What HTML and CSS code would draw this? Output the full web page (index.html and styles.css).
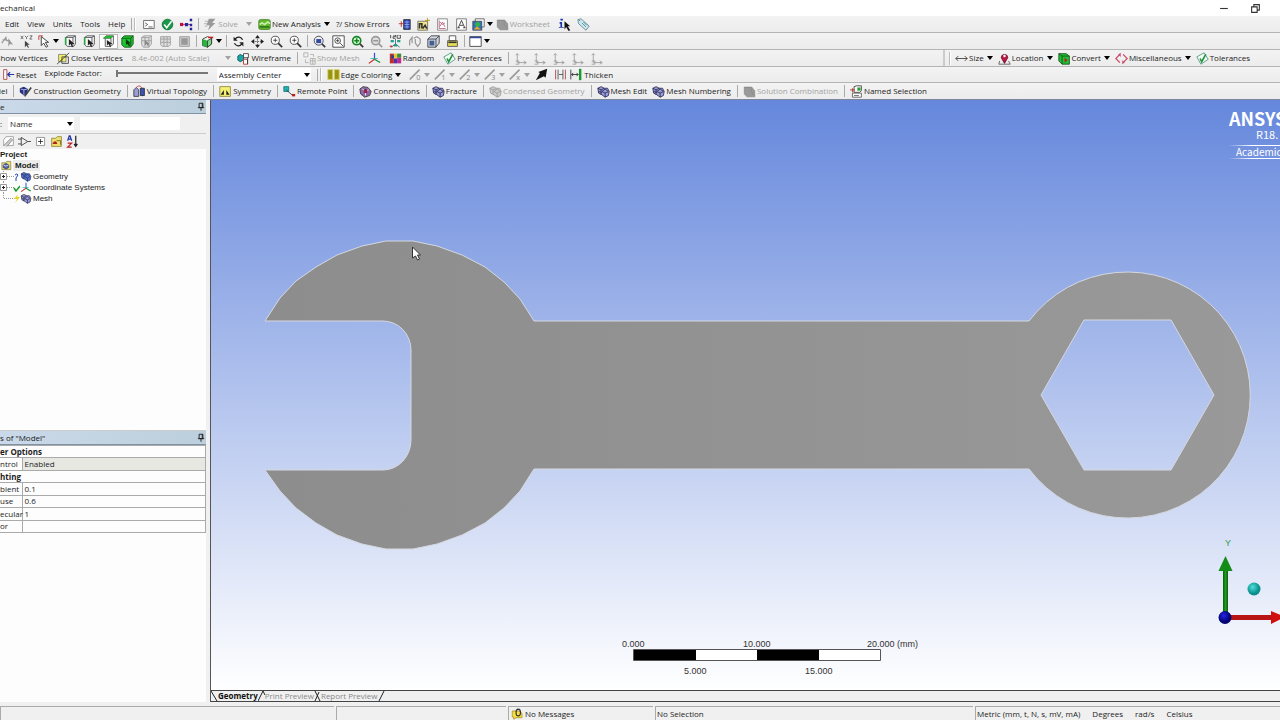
FILE: index.html
```html
<!DOCTYPE html>
<html lang="en">
<head>
<meta charset="utf-8">
<title>Mechanical</title>
<link rel="stylesheet" href="styles.css">
</head>
<body>
<svg class="sprite" aria-hidden="true">
  <symbol id="console" viewBox="0 0 16 16"><path d="M2 3h13v10H2z" fill="#fff" stroke="#555"/><path d="M4 6l3 2-3 2M8 11h5" fill="none" stroke="#444"/></symbol>
  <symbol id="check" viewBox="0 0 16 16"><circle cx="8" cy="8" r="6.500" fill="#18994a" stroke="#0b6a32"/><path d="M4 8l3 4 6-8" fill="none" stroke="#fff" stroke-width="2"/></symbol>
  <symbol id="nodes" viewBox="0 0 16 16"><path d="M1 8h12" stroke="#c03060" fill="none"/><path d="M0 6h4v4H0z" fill="#c01040"/><path d="M6 6h4v4H6zM12 1h3v3h-3zM12 7h3v3h-3zM12 12h3v3h-3z" fill="#26269c"/></symbol>
  <symbol id="bolt" viewBox="0 0 16 16"><path d="M6 1h8l-4 5h4L5 15l2-6H3z" fill="#999"/><path d="M1 4h4M0 7h4M1 10h3" stroke="#aaa"/></symbol>
  <symbol id="analysis" viewBox="0 0 16 16"><rect x="1" y="2" width="14" height="12" rx="2" fill="#65b832" stroke="#397d1a"/><path d="M2 8l3-2 3 2 4-3 3 2" stroke="#c9f0a5" fill="none" stroke-width="2"/><path d="M2 11h12" stroke="#2d7619" stroke-width="2"/></symbol>
  <symbol id="addbox" viewBox="0 0 16 16"><path d="M7 2h8v12H7z" fill="#2c45b3" stroke="#222"/><path d="M8 5h6M8 8h6M8 11h6M11 3v10" stroke="#98aef4"/><path d="M1 7h6M4 4v7" stroke="#b02020"/></symbol>
  <symbol id="chartnew" viewBox="0 0 16 16"><path d="M1 4h12v11H1z" fill="#eee58c" stroke="#666"/><path d="M3 13V7h3v6M7 13l3-4 2 4" stroke="#333" fill="none" stroke-width="2"/><path d="M10 3h6M13 0v6" stroke="#b08e12"/></symbol>
  <symbol id="plot" viewBox="0 0 16 16"><path d="M2 1h12v14H2z" fill="#fff" stroke="#777"/><path d="M4 3v10h8M5 5l3 3 3-2M5 10l3-5 3 6" fill="none" stroke="#b45470"/></symbol>
  <symbol id="letter" viewBox="0 0 16 16"><path d="M2 1h12v14H2z" fill="#fff" stroke="#666"/><path d="M4 12l4-9 4 9M6 9h4M3 12h3M10 12h3" fill="none" stroke="#222"/></symbol>
  <symbol id="picture" viewBox="0 0 16 16"><path d="M4 1h11v10H4z" fill="#fff" stroke="#555"/><path d="M1 4h11v11H1z" fill="#2c72c9" stroke="#444"/><circle cx="7" cy="8" r="3" fill="#31b345"/><path d="M2 14l4-4 5 4z" fill="#e5a52c"/></symbol>
  <symbol id="greyblock" viewBox="0 0 16 16"><path d="M1 2h10l4 5v8H5l-4-4z" fill="#999"/><path d="M2 3h8v5l4 5" fill="none" stroke="#888"/></symbol>
  <symbol id="info" viewBox="0 0 16 16"><path d="M3 1h3v2H3zM2 5h3v6h2v1H1v-1h2V7H2z" fill="#1733b4"/><path d="M8 4v10l2-3 3 5 2-1-3-5h3z" fill="#111"/></symbol>
  <symbol id="tag" viewBox="0 0 16 16"><path d="M1 2l4-1 10 9-4 5L2 7z" fill="#cde8ee" stroke="#58818c"/><path d="M6 6l5 5M8 5l4 4M2 2l2 2" stroke="#50838e"/></symbol>
  <symbol id="gcursor" viewBox="0 0 16 16"><path d="M1 10l5-7 1 4h4M2 6h4" fill="none" stroke="#9a9a9a" stroke-width="1.500"/><path d="M9 4v10l2-3 4 1z" fill="#999"/></symbol>
  <symbol id="xyz" viewBox="0 0 16 16"><path d="M1 1l3 4M4 1L1 5M6 1l2 2 2-2M8 3v2M12 1h3l-3 4h3" stroke="#555" fill="none"/><path d="M6 7v8l2-2 2 3 1-1-2-3h3z" fill="#444"/></symbol>
  <symbol id="pick" viewBox="0 0 16 16"><path d="M1 1h5M1 1v5" stroke="#b22"/><path d="M4 2v11l3-3 3 5 2-1-3-5h4z" fill="#fff" stroke="#222"/></symbol>
  <symbol id="cubeline" viewBox="0 0 16 16"><path d="M2 3l3-2h9v10l-2 3H4l-2-2zM2 3h9l3-2M11 3v10" fill="#f7f7f7" stroke="#444"/><path d="M2 3v9" stroke="#28a745" stroke-width="2"/><path d="M6 5v8l2-2 2 4 1-1-1-3h3z" fill="#222"/></symbol>
  <symbol id="cubeface" viewBox="0 0 16 16"><path d="M2 4l3-3h9v10l-3 3H4V4zM4 4h7l3-3M11 4v9" fill="#f7f7f7" stroke="#444"/><path d="M1 4l4-3h9l-3 3z" fill="#20b832"/><path d="M6 6v7l2-2 2 4 1-1-1-3h3z" fill="#222"/></symbol>
  <symbol id="cubegreen" viewBox="0 0 16 16"><path d="M1 4l3-3h11v10l-3 4H4l-3-3z" fill="#1fc52e" stroke="#114d17"/><path d="M1 4h11l3-3M12 4v10" fill="none" stroke="#114d17"/><path d="M6 5v7l2-1 2 3 1-1-1-3h2z" fill="#0c3710"/></symbol>
  <symbol id="cubegrey" viewBox="0 0 16 16"><path d="M2 3l3-2h9v10l-3 4H4l-2-3zM2 3h9l3-2M11 3v12M2 7h12M6 2v12" fill="#ddd" stroke="#999"/><path d="M6 6v7l2-2 2 3 1-4z" fill="#888"/></symbol>
  <symbol id="gridgrey" viewBox="0 0 16 16"><path d="M2 2h12v10l-2 2H4l-2-2zM2 5h12M2 9h12M6 2v12M10 2v12" fill="#ddd" stroke="#999"/></symbol>
  <symbol id="solidgrey" viewBox="0 0 16 16"><path d="M2 2h12v12H2z" fill="#ccc" stroke="#999"/><path d="M4 4h8v8H4z" fill="#999"/></symbol>
  <symbol id="extend" viewBox="0 0 16 16"><path d="M2 5l6-3 5 2v7l-5 4-6-2z" fill="#f4f4f4" stroke="#222"/><path d="M2 5l6 2v8l-6-2z" fill="#23b83a"/><path d="M8 7l5-3v7l-5 4z" fill="#7ed58a" stroke="#333"/><path d="M9 3h6" stroke="#c22" stroke-width="2"/></symbol>
  <symbol id="rotate" viewBox="0 0 16 16"><path d="M13 6a5 5 0 0 0-9-1M3 10a5 5 0 0 0 9 1" fill="none" stroke="#222" stroke-width="1.500"/><path d="M2 2v5h5zM14 14V9H9z" fill="#222"/></symbol>
  <symbol id="pan" viewBox="0 0 16 16"><path d="M8 2v12M2 8h12" stroke="#555" stroke-dasharray="2 1"/><path d="M8 0l3 4H5zM8 16l3-4H5zM0 8l4-3v6zM16 8l-4-3v6z" fill="#222"/></symbol>
  <symbol id="zoom" viewBox="0 0 16 16"><circle cx="6.500" cy="6.500" r="5" fill="#fff" stroke="#333"/><path d="M10 10l5 5" stroke="#333" stroke-width="2"/><path d="M4 6.500h5M6.500 4v5" stroke="#333"/></symbol>
  <symbol id="zoomfit" viewBox="0 0 16 16"><circle cx="7" cy="7" r="5.500" fill="#eef" stroke="#333"/><path d="M11 11l4 4" stroke="#333" stroke-width="2"/><path d="M4 5h6v5H4z" fill="#334a9c"/></symbol>
  <symbol id="zoombox" viewBox="0 0 16 16"><path d="M1 1h14v14H1z" fill="#fff" stroke="#333"/><circle cx="7" cy="7" r="3.500" fill="none" stroke="#333"/><path d="M10 10l4 4M5 7h4M7 5v4" stroke="#333"/></symbol>
  <symbol id="zoomgreen" viewBox="0 0 16 16"><circle cx="7" cy="7" r="5" fill="#d9ffd5" stroke="#168325" stroke-width="2"/><path d="M4 7h6M7 4v6" stroke="#168325" stroke-width="2"/><path d="M11 11l4 4" stroke="#333" stroke-width="2"/></symbol>
  <symbol id="zoomgrey" viewBox="0 0 16 16"><circle cx="7" cy="7" r="5" fill="#ddd" stroke="#999" stroke-width="2"/><path d="M4 7h6M11 11l4 4" stroke="#999" stroke-width="2"/></symbol>
  <symbol id="iso" viewBox="0 0 16 16"><path d="M2 0v4M5 0h3v2H5v2h3M10 0h4v4h-4z" fill="none" stroke="#333"/><path d="M8 5v6l-5 4M8 11l5 4" fill="none" stroke="#267"/><path d="M2 6h4v3H2zM10 6h4v3h-4zM6 11h4v3H6z" fill="#279c8c"/><path d="M1 13h3v2H1z" fill="#c33"/></symbol>
  <symbol id="look" viewBox="0 0 16 16"><path d="M2 13V7l3-4v7M7 4l4-2 4 3v5l-3 4-3-4V5" fill="none" stroke="#999" stroke-width="1.500"/></symbol>
  <symbol id="cubeview" viewBox="0 0 16 16"><path d="M1 5l4-4h10v9l-4 5H1z" fill="#cfd6e4" stroke="#333"/><path d="M1 5h10v10M11 5l4-4" fill="none" stroke="#333"/><path d="M3 7h6v6H3z" fill="#435f91"/></symbol>
  <symbol id="printer" viewBox="0 0 16 16"><path d="M4 1h8v6H4z" fill="#fff" stroke="#444"/><path d="M2 7h12v7H2z" fill="#e6df58" stroke="#444"/><path d="M3 9h10" stroke="#333" stroke-width="2"/></symbol>
  <symbol id="window" viewBox="0 0 16 16"><path d="M1 2h14v12H1z" fill="#fff" stroke="#333"/><path d="M1 3h14" stroke="#334a9c" stroke-width="2"/></symbol>
  <symbol id="closev" viewBox="0 0 16 16"><path d="M2 3h9v9H2z" fill="#f5f163" stroke="#777"/><path d="M0 15L15 1M6 6h8v8H6z" fill="none" stroke="#333"/></symbol>
  <symbol id="wire" viewBox="0 0 16 16"><path d="M1 5l3-2 4 2v5l-4 2-3-2z" fill="#18a7a7" stroke="#155"/><path d="M8 2h6v5H8z" fill="#fff" stroke="#333"/><path d="M8 9h5v6H8z" fill="#fff" stroke="#b22"/><path d="M13 7v8" stroke="#333"/></symbol>
  <symbol id="showmesh" viewBox="0 0 16 16"><path d="M1 1h5v5H1zM9 8h6v7H9zM9 11h6M12 8v7M9 3h4v3M3 9v4h4" fill="none" stroke="#aaa"/></symbol>
  <symbol id="axes" viewBox="0 0 16 16"><path d="M8 9V1" stroke="#2a50d0" stroke-width="1.500"/><path d="M8 9l-7 5" stroke="#c22" stroke-width="1.500"/><path d="M8 9l7 4" stroke="#198d35" stroke-width="1.500"/><path d="M3 8h9" stroke="#28b0b0"/></symbol>
  <symbol id="random" viewBox="0 0 16 16"><path d="M1 2h5v12H1z" fill="#c0302a"/><path d="M6 2h4v6H6z" fill="#e8c72a"/><path d="M6 8h4v6H6z" fill="#5030a8"/><path d="M10 2h5v5h-5z" fill="#3b8c3b"/><path d="M10 7h5v7h-5z" fill="#b92c8e"/><path d="M3 4h3v4H3z" fill="#243f9e"/></symbol>
  <symbol id="prefs" viewBox="0 0 16 16"><path d="M1 6l9-5 5 8-9 6z" fill="#f2fff5" stroke="#4a8c83"/><path d="M5 8l2 4 5-9" fill="none" stroke="#21933a" stroke-width="2"/></symbol>
  <symbol id="axisgrey" viewBox="0 0 16 16"><path d="M4 2v11h11M2 4l2-2 2 2M12 11l3 2-3 2M2 11h4v4H2" fill="none" stroke="#999"/></symbol>
  <symbol id="size" viewBox="0 0 16 16"><path d="M1 8h14M4 5L1 8l3 3M12 5l3 3-3 3" fill="none" stroke="#333"/></symbol>
  <symbol id="pin" viewBox="0 0 16 16"><path d="M2 11l-1 4h14l-2-4" fill="none" stroke="#555"/><path d="M8 14L4 7a4 4 0 1 1 8 0z" fill="#bd1745" stroke="#681029"/><circle cx="8" cy="5" r="1.500" fill="#fff"/></symbol>
  <symbol id="convert" viewBox="0 0 16 16"><path d="M1 2h9l4 3v10H5l-4-4z" fill="#21bf31" stroke="#164d1b"/><path d="M1 2l4 3h9M5 5v10" fill="none" stroke="#164d1b"/><path d="M8 7v6l4-3z" fill="#b12626"/></symbol>
  <symbol id="misc" viewBox="0 0 16 16"><path d="M6 3L1 8l5 5M10 3l5 5-5 5" fill="none" stroke="#c94967" stroke-width="1.500"/><path d="M7 1v5L4 3zM9 15v-5l3 3z" fill="#c94967"/></symbol>
  <symbol id="reset" viewBox="0 0 16 16"><path d="M2 2h4v12H2z" fill="#fff" stroke="#a33"/><path d="M7 8h8M10 5L7 8l3 3" fill="none" stroke="#2333a8" stroke-width="1.500"/></symbol>
  <symbol id="edgecol" viewBox="0 0 16 16"><path d="M1 2h6v12H1zM9 2h6v12H9z" fill="#99930e" stroke="#d3cf62"/></symbol>
  <symbol id="pen" viewBox="0 0 16 16"><path d="M1 15L6 6 4 5l11-4-2 11-2-2z" fill="#111"/></symbol>
  <symbol id="bars" viewBox="0 0 16 16"><path d="M2 2v12M14 2v12" stroke="#a33"/><path d="M5 2v12M11 2v12M6 8h5" stroke="#444"/></symbol>
  <symbol id="thicken" viewBox="0 0 16 16"><path d="M1 2v12M2 8h8M4 6L2 8l2 2M8 6l2 2-2 2" fill="none" stroke="#222"/><path d="M11 1h3v14h-3z" fill="#169a2d"/></symbol>
  <symbol id="construct" viewBox="0 0 16 16"><path d="M1 4l5-2 5 3-1 6-4 2-5-4z" fill="#26307f"/><path d="M2 5l4 1 4-1M6 6v6" stroke="#c6cbf2" fill="none"/><path d="M7 14l8-11" stroke="#444" stroke-width="2"/></symbol>
  <symbol id="topo" viewBox="0 0 16 16"><path d="M1 6l3-3 3 3v8H1z" fill="#9a9ed2" stroke="#334"/><path d="M9 4h5v9H9z" fill="#3a55b3" stroke="#223"/><path d="M4 3c3-3 6-2 7 1" fill="none" stroke="#b33"/></symbol>
  <symbol id="symm" viewBox="0 0 16 16"><path d="M1 2h13v12H1z" fill="#f5f173" stroke="#88833a"/><path d="M6 12V6l-4 6zM9 12V6l4 6z" fill="#222"/></symbol>
  <symbol id="remote" viewBox="0 0 16 16"><path d="M1 2h6v6H1z" fill="#25b2b2" stroke="#177"/><path d="M4 6l8 7" stroke="#333"/><path d="M11 11h4v3h-4z" fill="#b22"/></symbol>
  <symbol id="mesh" viewBox="0 0 16 16"><path d="M1 4l4-2 4 2 4 0 2 4-1 5-4 2-4-3-4-2z" fill="#9a9dd6" stroke="#23244f"/><path d="M1 4l4 2 4-2M5 6v6M6 8l4-3 4 3-4 2zM10 10v5M2 8l4 1" fill="none" stroke="#23244f"/></symbol>
  <symbol id="conn" viewBox="0 0 16 16"><path d="M1 5l4-3 6 1 4 5-2 5-6 2-5-4z" fill="#8d6aa5" stroke="#333"/><path d="M4 5l4 2 4-1M8 7v6" stroke="#fff"/><path d="M6 6h4v4H6z" fill="#a31c50"/></symbol>
  <symbol id="meshgrey" viewBox="0 0 16 16"><path d="M1 4l4-2 4 2 4 0 2 4-1 5-4 2-4-3-4-2z" fill="#ccc" stroke="#999"/><path d="M1 4l4 2 4-2M5 6v6M6 8l4-3 4 3-4 2zM10 10v5" fill="none" stroke="#999"/></symbol>
  <symbol id="named" viewBox="0 0 16 16"><path d="M5 2l3-1h6v6l-2 2H5z" fill="#fff" stroke="#333"/><path d="M9 3h4v4H9z" fill="#24a23a"/><path d="M3 10h11v5H3z" fill="#fff" stroke="#555"/><path d="M0 6h6M3 4v5" stroke="#b22"/><path d="M5 13h6" stroke="#555"/></symbol>
  <symbol id="page" viewBox="0 0 16 16"><path d="M5 2h9v11H2V6z" fill="#fff" stroke="#999"/><path d="M2 13l9-9 2 2-7 8" fill="#ccc" stroke="#888"/></symbol>
  <symbol id="gate" viewBox="0 0 16 16"><path d="M4 3v10l8-5zM0 5h4M0 11h4M12 8h4" fill="none" stroke="#333"/></symbol>
  <symbol id="plusbox" viewBox="0 0 16 16"><path d="M3 3h10v10H3z" fill="#fff" stroke="#888"/><path d="M5 8h6M8 5v6" stroke="#222"/></symbol>
  <symbol id="folder" viewBox="0 0 16 16"><path d="M2 4h5l2-2h5v12H2z" fill="#f0df6d" stroke="#8c8238"/><path d="M3 11c2-5 5-4 6 0z" fill="#a82222"/><path d="M8 7h5v5" fill="none" stroke="#665e20"/></symbol>
  <symbol id="sort" viewBox="0 0 16 16"><path d="M2 7l2-6h1l2 6M3 5h3" fill="none" stroke="#2333a8" stroke-width="1.500"/><path d="M2 10h5l-5 5h5" fill="none" stroke="#b22" stroke-width="1.500"/><path d="M12 1v13M10 11l2 3 2-3" fill="none" stroke="#222" stroke-width="1.500"/></symbol>
  <symbol id="model" viewBox="0 0 16 16"><path d="M2 4h5l2-2h6v12H2z" fill="#eee26f" stroke="#7b7440"/><path d="M4 7l4-2 4 2v4l-4 2-4-2z" fill="#5565b8" stroke="#25306b"/><path d="M4 7l4 2 4-2" fill="none" stroke="#fff"/></symbol>
  <symbol id="body" viewBox="0 0 16 16"><path d="M1 4l4-2 4 2 4 0 2 4-1 5-4 2-4-3-4-2z" fill="#5b76c8" stroke="#1c2c6b"/><path d="M1 4l4 2 4-2M5 6v6M6 8l4-3 4 3-4 2zM10 10v5" fill="none" stroke="#1c2c6b"/></symbol>
  <symbol id="tack" viewBox="0 0 16 16"><path d="M5 2h6v7H5zM3 9h10M8 9v5M10 2v7" fill="none" stroke="#222" stroke-width="1.500"/></symbol>
  <symbol id="bubble" viewBox="0 0 16 16"><path d="M1 4h9l4 3v6H6l-3 2v-3H1z" fill="#f4df45" stroke="#a48a1c"/><ellipse cx="9" cy="6" rx="3" ry="4.500" fill="none" stroke="#333" stroke-width="1.500"/></symbol>
  <symbol id="down" viewBox="0 0 8 8"><path d="M1 2h6L4 6z"/></symbol>
</svg>

<header class="titlebar"><h1>echanical</h1>
  <div class="winbtns">
    <button aria-label="Minimize"><svg viewBox="0 0 10 10"><path d="M1 5h7" stroke="#333"/></svg></button>
    <button aria-label="Restore"><svg viewBox="0 0 10 10"><path d="M1.500 3.500h5v5h-5zM3.500 3V1.500h5v5H7" fill="none" stroke="#333"/></svg></button>
  </div>
</header>

<div class="bar">
  <nav class="menu"><button>Edit</button><button>View</button><button>Units</button><button>Tools</button><button>Help</button></nav>
  <i class="sep"></i><i class="grip"></i>
  <button class="tool" aria-label="Console"><svg><use href="#console"/></svg></button>
  <button class="tool" aria-label="Check"><svg><use href="#check"/></svg></button>
  <button class="tool" aria-label="Tree"><svg><use href="#nodes"/></svg></button>
  <i class="sep"></i>
  <button class="cmd off"><svg><use href="#bolt"/></svg>Solve<svg class="dn gap"><use href="#down"/></svg></button>
  <button class="cmd push"><svg><use href="#analysis"/></svg>New Analysis<svg class="dn"><use href="#down"/></svg></button>
  <button class="cmd push">?/ Show Errors</button>
  <button class="tool push" aria-label="Add"><svg><use href="#addbox"/></svg></button>
  <button class="tool" aria-label="Chart"><svg><use href="#chartnew"/></svg></button>
  <button class="tool" aria-label="Plot"><svg><use href="#plot"/></svg></button>
  <button class="tool" aria-label="Comment"><svg><use href="#letter"/></svg></button>
  <button class="tool drop" aria-label="Image"><svg><use href="#picture"/></svg><svg class="dn"><use href="#down"/></svg></button>
  <button class="cmd off"><svg><use href="#greyblock"/></svg>Worksheet</button>
  <button class="tool push" aria-label="Information"><svg><use href="#info"/></svg></button>
  <button class="tool" aria-label="Tag"><svg><use href="#tag"/></svg></button>
</div>

<div class="bar pull">
  <button class="tool" aria-label="Select previous"><svg><use href="#gcursor"/></svg></button>
  <button class="tool" aria-label="Coordinates"><svg><use href="#xyz"/></svg></button>
  <button class="tool drop" aria-label="Select mode"><svg><use href="#pick"/></svg><svg class="dn"><use href="#down"/></svg></button>
  <button class="tool" aria-label="Vertex"><svg><use href="#cubeline"/></svg></button>
  <button class="tool" aria-label="Edge"><svg><use href="#cubeline"/></svg></button>
  <button class="tool on" aria-label="Face"><svg><use href="#cubeface"/></svg></button>
  <button class="tool" aria-label="Body"><svg><use href="#cubegreen"/></svg></button>
  <button class="tool" aria-label="Node"><svg><use href="#cubegrey"/></svg></button>
  <button class="tool" aria-label="Element face"><svg><use href="#gridgrey"/></svg></button>
  <button class="tool" aria-label="Element"><svg><use href="#solidgrey"/></svg></button>
  <i class="sep"></i>
  <button class="tool drop" aria-label="Extend"><svg><use href="#extend"/></svg><svg class="dn"><use href="#down"/></svg></button>
  <i class="sep"></i>
  <button class="tool" aria-label="Rotate"><svg><use href="#rotate"/></svg></button>
  <button class="tool" aria-label="Pan"><svg><use href="#pan"/></svg></button>
  <button class="tool" aria-label="Zoom"><svg><use href="#zoom"/></svg></button>
  <button class="tool" aria-label="Box zoom"><svg><use href="#zoom"/></svg></button>
  <i class="sep"></i>
  <button class="tool" aria-label="Fit"><svg><use href="#zoomfit"/></svg></button>
  <button class="tool" aria-label="Magnifier"><svg><use href="#zoombox"/></svg></button>
  <button class="tool" aria-label="Zoom in"><svg><use href="#zoomgreen"/></svg></button>
  <button class="tool" aria-label="Zoom out"><svg><use href="#zoomgrey"/></svg></button>
  <button class="tool" aria-label="Isometric"><svg><use href="#iso"/></svg></button>
  <button class="tool" aria-label="Look at"><svg><use href="#look"/></svg></button>
  <button class="tool" aria-label="Views"><svg><use href="#cubeview"/></svg></button>
  <button class="tool" aria-label="Print"><svg><use href="#printer"/></svg></button>
  <i class="sep"></i>
  <button class="tool drop" aria-label="Viewports"><svg><use href="#window"/></svg><svg class="dn"><use href="#down"/></svg></button>
</div>

<div class="bar">
  <div class="group grow">
    <button class="cmd bleed">Show Vertices</button>
    <button class="cmd far"><svg><use href="#closev"/></svg>Close Vertices</button>
    <button class="cmd off far scale">8.4e-002 (Auto Scale)<svg class="dn"><use href="#down"/></svg></button>
    <button class="cmd push"><svg><use href="#wire"/></svg>Wireframe</button>
    <i class="sep"></i>
    <button class="cmd off"><svg><use href="#showmesh"/></svg>Show Mesh</button>
    <button class="tool push" aria-label="Show coordinate systems"><svg><use href="#axes"/></svg></button>
    <button class="cmd push"><svg><use href="#random"/></svg>Random</button>
    <button class="cmd far"><svg><use href="#prefs"/></svg>Preferences</button>
    <i class="sep"></i>
    <button class="tool" aria-label="Axis 1"><svg><use href="#axisgrey"/></svg></button>
    <button class="tool" aria-label="Axis 2"><svg><use href="#axisgrey"/></svg></button>
    <button class="tool" aria-label="Axis 3"><svg><use href="#axisgrey"/></svg></button>
    <button class="tool" aria-label="Axis 4"><svg><use href="#axisgrey"/></svg></button>
    <button class="tool" aria-label="Axis 5"><svg><use href="#axisgrey"/></svg></button>
  </div>
  <div class="group right">
    <i class="grip"></i>
    <button class="cmd"><svg><use href="#size"/></svg>Size<svg class="dn"><use href="#down"/></svg></button>
    <button class="cmd"><svg><use href="#pin"/></svg>Location<svg class="dn"><use href="#down"/></svg></button>
    <button class="cmd"><svg><use href="#convert"/></svg>Convert<svg class="dn"><use href="#down"/></svg></button>
    <button class="cmd"><svg><use href="#misc"/></svg>Miscellaneous<svg class="dn"><use href="#down"/></svg></button>
    <button class="cmd"><svg><use href="#prefs"/></svg>Tolerances</button>
  </div>
</div>

<div class="bar short">
  <button class="cmd"><svg><use href="#reset"/></svg>Reset</button>
  <label class="explode" for="explode">Explode Factor:</label>
  <input id="explode" type="range" min="0" max="10" value="0">
  <div class="pick center"><select aria-label="Explode origin"><option>Assembly Center</option></select><svg class="dn"><use href="#down"/></svg></div>
  <i class="sep"></i><i class="grip"></i>
  <button class="cmd"><svg><use href="#edgecol"/></svg>Edge Coloring<svg class="dn"><use href="#down"/></svg></button>
  <button class="tool drop off push" aria-label="Edge 0"><svg class="edge" viewBox="0 0 16 16"><path d="M1 14L13 2"/><text x="9" y="15">0</text></svg><svg class="dn"><use href="#down"/></svg></button>
  <button class="tool drop off" aria-label="Edge 1"><svg class="edge" viewBox="0 0 16 16"><path d="M1 14L13 2"/><text x="9" y="15">1</text></svg><svg class="dn"><use href="#down"/></svg></button>
  <button class="tool drop off" aria-label="Edge 2"><svg class="edge" viewBox="0 0 16 16"><path d="M1 14L13 2"/><text x="9" y="15">2</text></svg><svg class="dn"><use href="#down"/></svg></button>
  <button class="tool drop off" aria-label="Edge 3"><svg class="edge" viewBox="0 0 16 16"><path d="M1 14L13 2"/><text x="9" y="15">3</text></svg><svg class="dn"><use href="#down"/></svg></button>
  <button class="tool drop off" aria-label="Edge X"><svg class="edge" viewBox="0 0 16 16"><path d="M1 14L13 2"/><text x="9" y="15">x</text></svg><svg class="dn"><use href="#down"/></svg></button>
  <button class="tool" aria-label="Direction"><svg><use href="#pen"/></svg></button>
  <button class="tool" aria-label="Spacing"><svg><use href="#bars"/></svg></button>
  <button class="cmd"><svg><use href="#thicken"/></svg>Thicken</button>
</div>

<div class="bar last">
  <button class="cmd bleed">del</button><i class="sep"></i>
  <button class="cmd"><svg><use href="#construct"/></svg>Construction Geometry</button><i class="sep"></i>
  <button class="cmd"><svg><use href="#topo"/></svg>Virtual Topology</button><i class="sep"></i>
  <button class="cmd"><svg><use href="#symm"/></svg>Symmetry</button><i class="sep"></i>
  <button class="cmd"><svg><use href="#remote"/></svg>Remote Point</button><i class="sep"></i>
  <button class="cmd"><svg><use href="#conn"/></svg>Connections</button><i class="sep"></i>
  <button class="cmd"><svg><use href="#mesh"/></svg>Fracture</button><i class="sep"></i>
  <button class="cmd off"><svg><use href="#meshgrey"/></svg>Condensed Geometry</button><i class="sep"></i>
  <button class="cmd"><svg><use href="#mesh"/></svg>Mesh Edit</button>
  <button class="cmd push"><svg><use href="#mesh"/></svg>Mesh Numbering</button><i class="sep"></i>
  <button class="cmd off"><svg><use href="#greyblock"/></svg>Solution Combination</button><i class="sep"></i>
  <button class="cmd"><svg><use href="#named"/></svg>Named Selection</button>
</div>

<main class="work">
  <aside class="side">
    <section class="outline">
      <h2 class="head"><span>e</span><svg><use href="#tack"/></svg></h2>
      <div class="filter"><span>:</span><div class="pick name"><select aria-label="Filter"><option>Name</option></select><svg class="dn"><use href="#down"/></svg></div><input type="text" aria-label="Filter text"></div>
      <div class="treebar">
        <button class="tool" aria-label="New"><svg><use href="#page"/></svg></button>
        <button class="tool" aria-label="Filter"><svg><use href="#gate"/></svg></button>
        <button class="tool" aria-label="Expand"><svg><use href="#plusbox"/></svg></button>
        <button class="tool" aria-label="Folder"><svg><use href="#folder"/></svg></button>
        <button class="tool" aria-label="Sort"><svg><use href="#sort"/></svg></button>
      </div>
      <ul class="tree">
        <li><b>Project</b></li>
        <li><svg><use href="#model"/></svg><b class="sel">Model</b></li>
        <li><svg class="lead" viewBox="0 0 20 11"><path d="M3.500 0v11M7 5.500h7" stroke="#999" stroke-dasharray="1 1"/><path d="M.5 2.500h6v6h-6z" fill="#fff" stroke="#999"/><path d="M2 5.500h3M3.500 4v3" stroke="#222"/><path d="M15 4q2-2 3 0l-2 3v3" stroke="#24b" fill="none"/></svg><svg><use href="#body"/></svg>Geometry</li>
        <li><svg class="lead" viewBox="0 0 20 11"><path d="M3.500 0v11M7 5.500h7" stroke="#999" stroke-dasharray="1 1"/><path d="M.5 2.500h6v6h-6z" fill="#fff" stroke="#999"/><path d="M2 5.500h3M3.500 4v3" stroke="#222"/><path d="M14 6l2 3 4-5" stroke="#1a9c2a" stroke-width="1.500" fill="none"/></svg><svg><use href="#axes"/></svg>Coordinate Systems</li>
        <li><svg class="lead" viewBox="0 0 20 11"><path d="M3.500 0v5.500h11" stroke="#999" stroke-dasharray="1 1" fill="none"/><path d="M18 1l-4 5h3l-2 4 5-6h-3z" fill="#e8d51e"/></svg><svg><use href="#mesh"/></svg>Mesh</li>
      </ul>
    </section>
    <section class="details">
      <h2 class="head"><span>s of "Model"</span><svg><use href="#tack"/></svg></h2>
      <table>
        <colgroup><col class="key"><col></colgroup>
        <tr><th colspan="2">er Options</th></tr>
        <tr class="locked"><td>ntrol</td><td>Enabled</td></tr>
        <tr><th colspan="2">hting</th></tr>
        <tr><td>bient</td><td>0.1</td></tr>
        <tr><td>use</td><td>0.6</td></tr>
        <tr><td>ecular</td><td>1</td></tr>
        <tr><td>or</td><td></td></tr>
      </table>
    </section>
  </aside>
  <section class="stage">
    <div class="view">
      <svg class="scene" viewBox="211 100 1069 590" preserveAspectRatio="xMinYMin slice">
        <defs>
          <linearGradient id="steel"><stop offset="0" stop-color="#8d8d8d"/><stop offset="1" stop-color="#999"/></linearGradient>
          <linearGradient id="fade"><stop offset="0" stop-color="#fff" stop-opacity="0"/><stop offset=".4" stop-color="#fff"/></linearGradient>
          <radialGradient id="ballc" cx=".4" cy=".35"><stop offset="0" stop-color="#4fe0da"/><stop offset="1" stop-color="#0b8e8c"/></radialGradient>
          <radialGradient id="ballb" cx=".4" cy=".35"><stop offset="0" stop-color="#2424e8"/><stop offset="1" stop-color="#000070"/></radialGradient>
          <linearGradient id="rod"><stop offset="0" stop-color="#0a5c0a"/><stop offset=".5" stop-color="#1f9c22"/><stop offset="1" stop-color="#0a5c0a"/></linearGradient>
        </defs>
        <path fill="url(#steel)" fill-rule="evenodd" stroke="#d5d8e0" d="M265 321L280 298 296 281 316 267 337 255 362 246 386 241H413L437 246 462 255 485 267 504 282 520 299 534 321H1029A123 123 0 1 1 1029 469H534L520 491 504 508 485 523 462 535 437 544 413 549H386L362 544 337 535 316 523 296 508 280 491 265 470H383A28 30 0 0 0 411 440V350A28 29 0 0 0 383 321ZM1084 320L1041 395 1084 470H1171L1214 395 1171 320Z"/>
        <g class="logo">
          <text class="brand" x="1229" y="126">ANSYS</text><text class="rel" x="1256" y="139">R18.</text><text class="lic" x="1236" y="156">Academic</text>
        </g>
        <path d="M1228 145h60v1h-60zM1228 158h60v1h-60z" fill="url(#fade)"/>
        <g class="ruler">
          <path d="M633.500 649.500h247v11h-247z" fill="#fff" stroke="#555"/><path d="M634 650h62v10h-62zM757 650h62v10h-62z"/>
          <text x="622" y="647">0.000</text><text x="743" y="647">10.000</text><text x="867" y="647">20.000 (mm)</text><text x="684" y="674">5.000</text><text x="805" y="674">15.000</text>
        </g>
        <path d="M1223 570h5v45h-5z" fill="url(#rod)"/><path d="M1225.500 556l7 15h-14z" fill="#128c17"/>
        <path d="M1228 615h46v5h-46z" fill="#b81414"/><path d="M1271 611l14 6-14 7z" fill="#d01010"/>
        <circle cx="1225" cy="617.500" r="6.500" fill="url(#ballb)"/><circle cx="1254" cy="589" r="6.500" fill="url(#ballc)"/>
        <text class="axis" x="1225" y="546">Y</text>
        <path d="M412.500 247v11l3-2 2 4 2-1-2-4h3z" fill="#fff" stroke="#333"/>
      </svg>
    </div>
    <div class="tabs">
      <svg viewBox="0 0 7 10"><path d="M0 0l6 10" stroke="#222"/></svg>
      <button class="cur">Geometry</button>
      <svg viewBox="0 0 7 10"><path d="M0 10L5 0l2 4" fill="none" stroke="#222"/></svg>
      <button>Print Preview</button>
      <svg viewBox="0 0 7 10"><path d="M1 10L5 1M1 0l5 10" stroke="#222"/></svg>
      <button>Report Preview</button>
      <svg viewBox="0 0 7 10"><path d="M1 10L6 0" stroke="#222"/></svg>
    </div>
  </section>
</main>

<footer class="status">
  <div class="c1"></div><div class="c2"></div>
  <div class="c3"><svg><use href="#bubble"/></svg>No Messages</div>
  <div class="c4">No Selection</div>
  <div class="c5"><span>Metric (mm, t, N, s, mV, mA)</span><span>Degrees</span><span>rad/s</span><span>Celsius</span></div>
</footer>
</body>
</html>
```
FILE: styles.css
```css
* { box-sizing: border-box; }
body {
  margin: 0;
  height: 100vh;
  display: flex;
  flex-direction: column;
  overflow: hidden;
  background: #f0f0f0;
  color: #1c1c1c;
  font: 8px/12px "Open Sans", "Noto Sans", sans-serif;
}
button, select, input { font: inherit; color: inherit; border: 0; padding: 0; background: none; margin: 0; }
h1, h2 { font: inherit; margin: 0; }
svg { display: block; flex: none; }
.sprite { position: absolute; width: 0; height: 0; }

.titlebar { height: 16px; background: #fff; display: flex; justify-content: space-between; align-items: center; }
.winbtns { display: flex; gap: 20px; padding-right: 19px; }
.winbtns svg { width: 11px; height: 11px; }

.bar { height: 17px; display: flex; align-items: center; border-bottom: 1px solid #b4b4b4; background: linear-gradient(#f3f3f3, #ececec); white-space: nowrap; overflow: hidden; }
.bar.short { height: 16px; padding-left: 2px; }
.bar.last { border-bottom: 1px solid #7d869c; }
.menu { display: flex; gap: 8px; padding-left: 5px; }
.sep { width: 1px; height: 12px; background: #aaa; margin: 0 2px 0 6px; flex: none; }
.tool + .sep { margin-left: 2px; }
.sep + .cmd { margin-left: 3px; }
.grip { width: 2px; height: 13px; border-left: 1px solid #bbb; border-right: 1px solid #fff; margin-right: 3px; flex: none; }
.grip + .cmd { margin-left: 2px; }
.tool, .cmd { display: flex; align-items: center; height: 15px; flex: none; }
.cmd { gap: 1px; }
.tool { width: 19px; justify-content: center; }
.tool.drop { width: 25px; }
.pull .tool:first-child { margin-left: -2px; }
.tool svg, .cmd svg { width: 13px; height: 13px; }
.dn, .tool .dn, .cmd .dn { width: 8px; height: 8px; margin-left: 1px; }
.cmd .gap { margin-left: 6px; }
.scale .dn { margin-left: 14px; }
.tool.on { background: #fff; box-shadow: inset 0 0 0 1px #bbb; }
.push { margin-left: 5px; }
.far { margin-left: 9px; }
.off { color: #a2a2a2; fill: #a2a2a2; }
.edge path { stroke: #999; stroke-width: 2; }
.edge text { font-size: 9px; fill: #888; }
.bleed { margin-left: -4px; }
.group { display: flex; align-items: center; height: 16px; }
.grow { flex: 1; border-right: 2px solid #ccc; }
.right { width: 335px; padding-left: 4px; gap: 4px; }
.right .grip { margin-right: 0; }
.right .grip + .cmd { margin-left: 0; }
.explode { margin: -3px 14px 0 8px; }
#explode { appearance: none; width: 92px; height: 12px; align-self: flex-start; }
#explode::-webkit-slider-runnable-track { height: 2px; background: #777; }
#explode::-webkit-slider-thumb { appearance: none; width: 2px; height: 7px; margin-top: -2px; background: #777; }
.pick { display: flex; align-items: center; background: #fff; height: 13px; }
.pick select { appearance: none; flex: 1; height: 12px; padding-left: 2px; }
.center { width: 94px; margin-left: 9px; }

.work { flex: 1; display: flex; min-height: 0; }
.side { width: 206px; flex: none; display: flex; flex-direction: column; background: #fdfdfd; }
.outline { height: 331px; display: flex; flex-direction: column; border-bottom: 1px solid #ccc; }
.head { height: 14px; display: flex; justify-content: space-between; align-items: center; background: linear-gradient(90deg, #cad9e9, #bccfdc); border-bottom: 1px solid #7f93a5; }
.head svg { width: 10px; height: 10px; }
.filter { height: 20px; display: flex; align-items: center; background: #f0f0f0; border-bottom: 1px solid #ccc; }
.name { width: 66px; margin: 0 6px; }
.filter input { width: 100px; height: 13px; background: #fff; }
.treebar { height: 15px; display: flex; align-items: center; background: #f0f0f0; }
.treebar .tool { width: 16px; }
.tree { list-style: none; margin: 0; padding: 0; font: 8px/11px "Liberation Sans", sans-serif; }
.tree li { display: flex; align-items: center; height: 11px; }
.tree svg { width: 12px; height: 11px; margin-right: 1px; }
.tree .lead { width: 20px; margin: 0; }
.sel { background: #ececec; padding: 0 2px; }
.details { flex: 1; }
table { width: 206px; height: 88px; border-collapse: collapse; table-layout: fixed; line-height: 10px; }
.key { width: 22px; }
td, th { border: 1px solid #aaa; padding: 0 2px; text-align: left; font-weight: 400; white-space: nowrap; }
th { font-weight: 700; padding: 0; }
td:first-child { padding: 0; }
th, td:first-child { border-left: 0; }
.locked td + td { background: #e8e8e3; }

.stage { flex: 1; min-width: 0; margin-left: 4px; border-left: 1px solid #555; display: flex; flex-direction: column; }
.view { flex: 1; min-height: 0; background: linear-gradient(#6587dc, #fff); overflow: hidden; }
.scene { width: 100%; height: 100%; }
.logo { fill: #fff; font-family: "Noto Sans CJK KR", sans-serif; }
.brand { font-size: 18px; font-weight: 700; }
.rel { font-size: 11px; }
.lic { font-size: 10px; }
.ruler text { font: 9px "Liberation Sans", sans-serif; fill: #333; }
.axis { font: 9px "Liberation Sans", sans-serif; fill: #2da04a; }
.tabs { height: 12px; border-top: 1px solid #444; border-bottom: 1px solid #444; display: flex; }
.tabs svg { width: 7px; height: 10px; }
.tabs button { line-height: 10px; color: #888; }
.tabs .cur { color: #111; font-weight: 700; }

.status { height: 18px; padding-top: 4px; display: flex; gap: 2px; line-height: 12px; white-space: nowrap; }
.status div { display: flex; align-items: center; border-top: 1px solid #aaa; border-left: 1px solid #aaa; padding-left: 1px; }
.status svg { width: 13px; height: 12px; }
.c1 { width: 334px; }
.c2 { width: 170px; }
.c3 { width: 145px; }
.status .c3 { padding-left: 2px; gap: 1px; }
.c4 { flex: 1; }
.status .c5 { width: 305px; gap: 12px; }
```
